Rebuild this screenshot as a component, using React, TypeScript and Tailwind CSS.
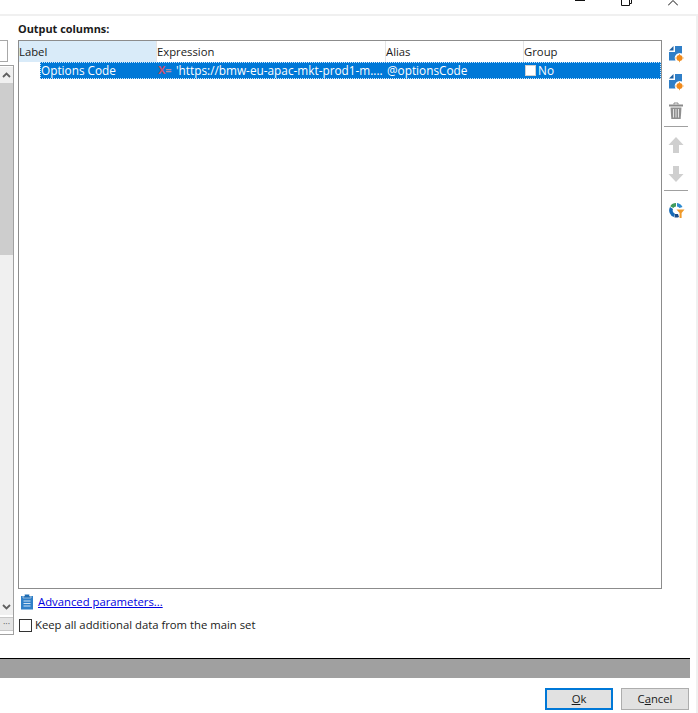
import React from "react";

const font = { fontFamily: '"Open Sans", "Noto Sans", sans-serif' };

function FileSun() {
  return (
    <svg width="16" height="18" viewBox="0 0 16 18">
      <path d="M1 5.5 L5.5 1 V5.5 Z" fill="#1f5f9f" />
      <path d="M7 1 H14 V8.5 A5 5 0 0 0 7.5 15.5 H1 V7 H7 Z" fill="#2f7fc8" />
      <circle cx="11.5" cy="13" r="3" fill="#f08a1c" />
      <path d="M11.5 8.8v1.2M11.5 16v1.2M7.3 13h1.2M14.5 13h1.2" stroke="#f4a84a" strokeWidth="1" />
    </svg>
  );
}

function Trash() {
  return (
    <svg width="16" height="18" viewBox="0 0 16 18">
      <path d="M6 2.5 V1 H10 V2.5" fill="none" stroke="#8a8a8a" strokeWidth="1" />
      <rect x="1" y="2.5" width="14" height="2" fill="#8a8a8a" />
      <path d="M2.5 5.5 H13.5 L12.7 17 H3.3 Z" fill="#8f8f8f" />
      <path d="M5.5 7 V15.5 M8 7 V15.5 M10.5 7 V15.5" stroke="#e4e4e4" strokeWidth="1" />
    </svg>
  );
}

function ArrowUp() {
  return (
    <svg width="16" height="18" viewBox="0 0 16 18">
      <path d="M8 1 L15.5 9 H11 V17 H5 V9 H0.5 Z" fill="#cfcfcf" />
    </svg>
  );
}

function ArrowDown() {
  return (
    <svg width="16" height="18" viewBox="0 0 16 18">
      <path d="M8 17 L15.5 9 H11 V1 H5 V9 H0.5 Z" fill="#cfcfcf" />
    </svg>
  );
}

function Ring() {
  return (
    <svg width="17" height="17" viewBox="0 0 17 17">
      <path d="M8 1 A7 7 0 0 0 2.2 4.2 L5.3 6 A3.5 3.5 0 0 1 8 4.5 Z" fill="#3f9a5c" />
      <path d="M2 5 A7 7 0 0 0 6 15 L7 11.7 A3.5 3.5 0 0 1 5 7 Z" fill="#176bb8" />
      <path d="M7 12 L6.5 15.4 A7 7 0 0 0 11 15 L10 12 Z" fill="#1b4f8c" />
      <path d="M9 1 A7 7 0 0 1 14.5 5 L11.5 6 A3.5 3.5 0 0 0 9 4.5 Z" fill="#2e8bd0" />
      <path d="M8.5 7.5 H16.5 L13.6 11 V16 H11.6 V11 Z" fill="#f09a2a" />
    </svg>
  );
}

function Clipboard() {
  return (
    <svg width="14" height="17" viewBox="0 0 14 17">
      <rect x="1" y="3" width="12" height="13.5" fill="#2f7fc8" />
      <path d="M4.5 3 V1.2 H9.5 V3 H11 V5 H3 V3 Z" fill="#1f6cb2" stroke="#ffffff" strokeWidth="0.5" />
      <path d="M3.5 8 H10.5 M3.5 10.5 H10.5 M3.5 13 H10.5" stroke="#cfe4f6" strokeWidth="1" />
    </svg>
  );
}

function Chevron({ up }: { up?: boolean }) {
  return (
    <svg width="9" height="6" viewBox="0 0 9 6">
      <path d={up ? "M1 5 L4.5 1.5 L8 5" : "M1 1 L4.5 4.5 L8 1"} fill="none" stroke="#606060" strokeWidth="1.8" />
    </svg>
  );
}

function ToolSlot({ children, h }: { children: React.ReactNode; h: string }) {
  return <div className={`flex items-center justify-center ${h}`}>{children}</div>;
}

export default function App() {
  return (
    <div className="w-[698px] h-[713px] bg-white overflow-hidden text-[11.3px] leading-[16px] text-[#1a1a1a]" style={font}>
      <div className="h-[14px] relative overflow-hidden">
        <div className="flex justify-end pr-[20px] gap-[36px]">
          <svg width="10" height="6" viewBox="0 0 10 6"><path d="M0 0.5H10" stroke="#111" /></svg>
          <svg width="11" height="6" viewBox="0 0 11 6"><path d="M0.5 0V5.5H8.5V0M8.5 3.5H10.5V0" fill="none" stroke="#111" /></svg>
          <svg width="10" height="6" viewBox="0 0 10 6"><path d="M0 5.5L5 0.5L10 5.5" fill="none" stroke="#111" /></svg>
        </div>
      </div>
      <div className="h-[699px] border-t-2 border-r-2 border-[#f0f0f0]">
        <div className="h-[642px] flex">
          <div className="w-[14px] pt-[24px] flex flex-col">
            <div className="w-[8px] h-[22px] border border-l-0 border-[#a8a8a8] bg-white" />
            <div className="w-[14px] h-[570px] mt-[3px] border border-l-0 border-[#a0a0a0] flex flex-col pt-[1px] pb-[3px]">
              <div className="h-[16px] flex items-center justify-center bg-[#f0f0f0]"><Chevron up /></div>
              <div className="flex-1 bg-[#f0f0f0] flex flex-col">
                <div className="h-[172px] bg-[#cdcdcd]" />
              </div>
              <div className="h-[16px] flex items-center justify-center bg-[#f0f0f0]"><Chevron /></div>
              <div className="h-[14px] mt-[2px] bg-[#e4e4e4] border-t border-b border-[#c8c8c8] flex items-center justify-center text-[9px] leading-[10px] text-[#555]">···</div>
            </div>
          </div>
          <div className="w-[644px] ml-[4px] flex flex-col">
            <div className="h-[24px] pt-[5px] font-bold text-[10.9px] leading-[16px]">Output columns:</div>
            <div className="h-[549px] border border-[#8c8c8c] flex flex-col">
              <div className="flex h-[21px] items-center">
                <div className="w-[138px] h-full bg-[#d9ebf9] border-r border-[#e5e5e5] flex items-center">Label</div>
                <div className="w-[229px] h-full border-r border-[#e5e5e5] flex items-center">Expression</div>
                <div className="w-[138px] h-full border-r border-[#e5e5e5] flex items-center">Alias</div>
                <div className="flex-1 h-full flex items-center">Group</div>
              </div>
              <div className="flex h-[17px] ml-[21px] pb-[1px] bg-[#0078d7] text-white text-[11.8px] items-center outline outline-1 -outline-offset-1 outline-dotted outline-[#cfe6f8]">
                <div className="w-[117px] pl-[1px]">Options Code</div>
                <div className="w-[229px] flex items-center">
                  <span className="w-[19px] pl-[1px] font-bold text-[11px] leading-[16px] whitespace-nowrap"><span className="text-[#c9506a]">X</span><span className="text-[#b98aa0]">=</span></span>
                  <span className="whitespace-nowrap">'https://bmw-eu-apac-mkt-prod1-m....</span>
                </div>
                <div className="w-[136px] pl-[1px]">@optionsCode</div>
                <div className="flex items-center pl-[3px]">
                  <span className="w-[11px] h-[11px] bg-white border border-[#d0d0d0] mr-[2px]" />
                  <span>No</span>
                </div>
              </div>
            </div>
            <div className="flex items-center h-[17px] mt-[4px] pl-[2px]">
              <Clipboard />
              <a className="ml-[4px] text-[#0000e0] underline">Advanced parameters...</a>
            </div>
            <div className="flex items-center h-[16px] mt-[7px] pl-[1px]">
              <span className="w-[13px] h-[13px] border border-[#333] bg-white" />
              <span className="ml-[3px]">Keep all additional data from the main set</span>
            </div>
          </div>
          <div className="w-[28px] pt-[28px] flex flex-col items-center">
            <ToolSlot h="h-[20px]"><FileSun /></ToolSlot>
            <ToolSlot h="h-[20px] mt-[8px]"><FileSun /></ToolSlot>
            <ToolSlot h="h-[20px] mt-[9px]"><Trash /></ToolSlot>
            <div className="w-[24px] h-px bg-[#a0a0a0] mt-[5px]" />
            <ToolSlot h="h-[20px] mt-[8px]"><ArrowUp /></ToolSlot>
            <ToolSlot h="h-[20px] mt-[9px]"><ArrowDown /></ToolSlot>
            <div className="w-[24px] h-px bg-[#a0a0a0] mt-[6px]" />
            <ToolSlot h="h-[20px] mt-[9px]"><Ring /></ToolSlot>
          </div>
        </div>
        <div className="w-[690px] h-[20px] border-t border-black bg-[#a0a0a0]" />
        <div className="flex justify-end gap-[8px] pr-[7px] pt-[10px]">
          <button className="w-[68px] h-[22px] bg-[#e1e1e1] border-2 border-[#0078d7] leading-[16px]"><span className="underline">O</span>k</button>
          <button className="w-[68px] h-[22px] bg-[#e1e1e1] border border-[#adadad] leading-[16px]">C<span className="underline">a</span>ncel</button>
        </div>
      </div>
    </div>
  );
}
